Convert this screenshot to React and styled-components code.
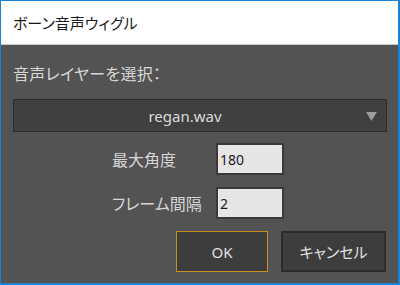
import React from 'react'
import styled, { createGlobalStyle } from 'styled-components'

const GlobalStyle = createGlobalStyle`
  html, body {
    margin: 0;
    padding: 0;
    background: #ffffff;
  }
  body {
    font-family: "Noto Sans", "Noto Sans CJK JP", sans-serif;
    font-feature-settings: "palt";
  }
`

function App() {
  return (
    <>
      <GlobalStyle />
      <Window>
        <TitleBar>ボーン音声ウィグル</TitleBar>
        <Body>
          <Label>音声レイヤーを選択：</Label>
          <Dropdown>
            <span>regan.wav</span>
            <Arrow viewBox="0 0 12 10">
              <path d="M0 0 L12 0 L6 10 Z" fill="#9c9c9c" />
            </Arrow>
          </Dropdown>
          <Fields>
            <FieldRow>
              <FieldLabel>最大角度</FieldLabel>
              <Input>180</Input>
            </FieldRow>
            <FieldRow>
              <FieldLabel>フレーム間隔</FieldLabel>
              <Input>2</Input>
            </FieldRow>
          </Fields>
          <Buttons>
            <Button primary>OK</Button>
            <Button wide>キャンセル</Button>
          </Buttons>
        </Body>
      </Window>
    </>
  )
}

export default App

const Window = styled.div`
  width: 400px;
  height: 285px;
  box-sizing: border-box;
  border: 1px solid #1883d7;
  border-right-width: 2px;
  border-bottom-width: 2px;
  display: flex;
  flex-direction: column;
  overflow: hidden;
`
const TitleBar = styled.div`
  height: 43px;
  flex: none;
  background: #ffffff;
  border-bottom: 1px solid #c9c9c9;
  display: flex;
  align-items: center;
  padding-left: 12px;
  font-size: 15px;
  color: #1a1a1a;
`
const Body = styled.div`
  flex: 1;
  background: #535353;
  padding: 0 11px 0 12px;
  display: flex;
  flex-direction: column;
`
const Label = styled.div`
  margin-top: 18px;
  height: 22px;
  line-height: 22px;
  font-size: 16px;
  letter-spacing: 0.3px;
  color: #d6d6d6;
`
const Dropdown = styled.div`
  margin-top: 14px;
  height: 33px;
  box-sizing: border-box;
  background: #404040;
  border: 1px solid #2c2c2c;
  padding-right: 30px;
  position: relative;
  display: flex;
  align-items: center;
  justify-content: center;
  font-size: 15px;
  color: #dadada;
`
const Arrow = styled.svg`
  position: absolute;
  right: 9px;
  top: 12px;
  width: 11px;
  height: 9px;
`
const Fields = styled.div`
  margin-top: 11px;
  padding-left: 99px;
  display: flex;
  flex-direction: column;
  gap: 12px;
`
const FieldRow = styled.div`
  display: flex;
  align-items: center;
  height: 32px;
`
const FieldLabel = styled.div`
  width: 104px;
  font-size: 16px;
  color: #d6d6d6;
`
const Input = styled.div`
  width: 68px;
  height: 32px;
  box-sizing: border-box;
  background: #e6e6e6;
  border: 2px solid #3a3a3a;
  padding-left: 2px;
  display: flex;
  align-items: center;
  font-size: 14px;
  color: #1a1a1a;
`
const Buttons = styled.div`
  margin-top: 12px;
  display: flex;
  justify-content: flex-end;
  gap: 13px;
  padding-right: 1px;
`
const Button = styled.div`
  width: ${p => (p.wide ? '105px' : '92px')};
  height: 41px;
  box-sizing: border-box;
  background: #3d3d3d;
  border: ${p => (p.primary ? '1px solid #c58f22' : '2px solid #2b2b2b')};
  display: flex;
  align-items: center;
  justify-content: center;
  font-size: 15px;
  color: #e0e0e0;
`
